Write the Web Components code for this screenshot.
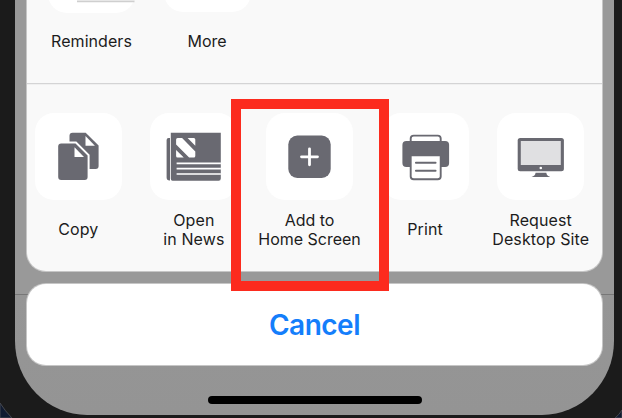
<!DOCTYPE html>
<html lang="en"><head><meta charset="utf-8"><title>Share sheet</title>
<style>
body{margin:0;width:622px;height:418px;overflow:hidden;font-family:Inter,"Liberation Sans",sans-serif}
</style></head><body>
<phone-frame>
<share-sheet>
<share-item slot="apps" style="--ls:.05px"><svg slot="icon" viewBox="48 -74 87 87"><path d="M77 1.4H134.5" stroke="#cfcfcf" stroke-width="1.7"/></svg>Reminders</share-item>
<share-item slot="apps" style="--up:1.5px;--ls:0px">More</share-item>
<share-item slot="actions"><svg slot="icon" viewBox="34.8 113 87 87"><path fill="#696971" d="M72.3 132.7H85.5L98.4 145.5V166Q98.4 169 95.4 169H72.3Q69.3 169 69.3 166V135.7Q69.3 132.7 72.3 132.7Z"/><path fill="#fff" d="M85.3 136V145.7H94.7Z"/><path fill="#696971" stroke="#fff" stroke-width="4" paint-order="stroke" d="M61 143.5H75.3L87.4 155.6V177Q87.4 180 84.4 180H61Q58 180 58 177V146.5Q58 143.5 61 143.5Z"/><path fill="#fff" d="M74.3 147.3V157H83.8Z"/></svg>Copy</share-item>
<share-item slot="actions"><svg slot="icon" viewBox="150.4 113 87 87"><path fill="#696971" d="M171.2 132.8H221.2V178.5Q221.2 180.7 219 180.7H173Q171.2 180.7 171.2 178.7ZM169 138H170.4V180.5H170Q167 180.5 167 177.5V140Q167 138 169 138Z"/><path fill="#fff" d="M178 138H182.5L195.7 151.5V156Q195.7 157.6 194.2 157.6H189.5L176.5 144.5V139.5Q176.5 138 178 138ZM188 138H194.2Q195.7 138 195.7 139.5V145.7ZM176.5 150L184.2 157.6H178Q176.5 157.6 176.5 156Z"/><path stroke="#fff" stroke-width="1.7" d="M177 163.3H221.3M177 168.7H221.3M177 174H221.3"/></svg>Open<br>in News</share-item>
<share-item slot="actions" style="--ls:-.02px"><svg slot="icon" viewBox="266 113 87 87"><rect x="288.3" y="135.5" width="42.4" height="42.4" rx="9" fill="#696971"/><path d="M301.5 156.8H317.5M309.5 148.8V164.8" stroke="#fff" stroke-width="2.8" stroke-linecap="round"/></svg>Add to<br>Home Screen</share-item>
<share-item slot="actions"><svg slot="icon" viewBox="381.6 113 87 87"><rect x="410.3" y="135.6" width="30" height="14" rx="3" fill="#fff" stroke="#696971" stroke-width="1.9"/><rect x="402" y="141" width="46.7" height="26" rx="4" fill="#696971"/><path d="M410.3 155.3H440.3V176.5Q440.3 179.2 437.3 179.2H413.3Q410.3 179.2 410.3 176.5Z" fill="#fff" stroke="#696971" stroke-width="1.9"/><path d="M415.5 162.7H435.2M415.5 170.7H435.2" stroke="#696971" stroke-width="1.9" stroke-linecap="round"/></svg>Print</share-item>
<share-item slot="actions"><svg slot="icon" viewBox="497.2 113 87 87"><rect x="517.9" y="138" width="46.2" height="33.2" rx="2.5" fill="#696971"/><path d="M521 141H561V165H521Z" fill="#e0e0e2"/><circle cx="541" cy="168" r="1.3" fill="#fff"/><path d="M535.8 172.8H546.5C547 175.5 548 176 550.5 177H531.7C534.3 176 535.3 175.5 535.8 172.8Z" fill="#696971"/></svg>Request<br>Desktop Site</share-item>
</share-sheet>
<cancel-button>Cancel</cancel-button>
<home-bar></home-bar>
</phone-frame>
<highlight-box></highlight-box>
<script>
function define(name, html){
  const t=document.createElement('template');t.innerHTML=html;
  customElements.define(name,class extends HTMLElement{
    constructor(){super();this.attachShadow({mode:'open'}).append(t.content.cloneNode(true));}
  });
}
define('phone-frame',`<style>
:host{display:block;position:relative;width:622px;height:418px;background:#1b1b1b;overflow:hidden}
.corners{position:absolute;inset:0}
.screen{position:relative;box-sizing:border-box;height:415px;margin:0 8px 0 15px;padding:0 12px;border-radius:0 0 72px 72px/0 0 74px 74px;background:linear-gradient(#999 0 294px,#777 294px 295px,#969696 295px,#949494)}
</style><svg class="corners" viewBox="0 0 622 418"><path d="M0 403Q5 411 12 418H0ZM622 410Q619 415 615 418H622Z" fill="#101a30" stroke="#454850"/></svg><div class="screen"><slot></slot></div>`);
define('share-sheet',`<style>
:host{display:block;box-sizing:border-box;height:271px;border-radius:0 0 19px 19px;background:#f9f9f9;box-shadow:0 0 0 1px #c6c6c6;overflow:hidden}
.apps,.actions{display:grid;grid-template-columns:repeat(5,87px);column-gap:28.6px}
.apps{height:83px;padding-left:21px;align-items:start}
.line{height:1px;background:#d4d4d5;border-bottom:1px solid #f0f0f0}
.actions{padding:28px 0 0 7.8px}
.apps ::slotted(*){margin-top:-74px;--label:56px}
</style><div class="apps"><slot name="apps"></slot></div><div class="line"></div><div class="actions"><slot name="actions"></slot></div>`);
define('share-item',`<style>
:host{display:flex;flex-direction:column;align-items:center;width:87px}
.tile{flex:none;width:87px;height:87px;border-radius:19px;background:#fff;margin-top:calc(0px - var(--up,0px));margin-bottom:var(--up,0px)}
::slotted(svg){display:block;width:87px;height:87px}
.label{display:flex;align-items:center;height:var(--label,59px);font-size:16px;line-height:19px;letter-spacing:var(--ls,.1px);color:#1c1c1c;text-align:center;white-space:nowrap}
</style><div class="tile"><slot name="icon"></slot></div><div class="label"><span><slot></slot></span></div>`);
define('cancel-button',`<style>
:host{display:flex;align-items:center;justify-content:center;height:81px;margin-top:13px;border-radius:19px;background:#fff;box-shadow:0 0 0 1px #c6c6c6;color:#147efb;font-size:28px;font-weight:600;letter-spacing:-.5px}
</style><slot></slot>`);
define('home-bar',`<style>:host{display:block;width:214px;height:7.5px;margin:31px auto 0;border-radius:4px;background:#000}</style>`);
define('highlight-box',`<style>:host{position:absolute;left:231px;top:99px;box-sizing:border-box;width:158px;height:192px;border:10px solid #fc2b1e}</style>`);
</script>
</body></html>
